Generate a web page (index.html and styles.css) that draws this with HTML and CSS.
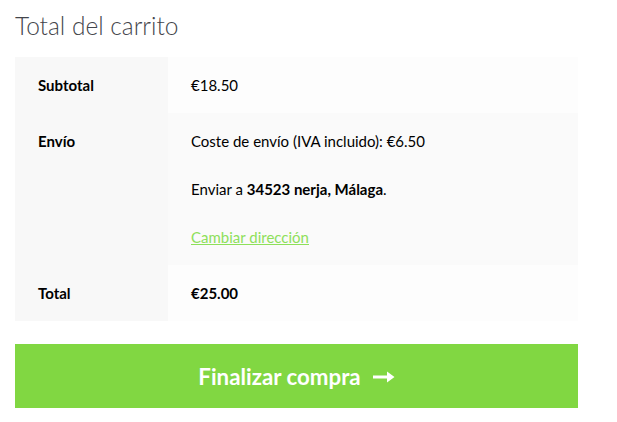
FILE: index.html
```
<!DOCTYPE html>
<html lang="es">
<head>
  <meta charset="UTF-8">
  <title>Total del carrito</title>
  <link rel="stylesheet" href="styles.css">
</head>
<body>
<div class="cart-totals">
  <h2>Total del carrito</h2>
  <table class="totals">
    <tr class="row-subtotal">
      <th>Subtotal</th>
      <td>€18.50</td>
    </tr>
    <tr class="row-shipping">
      <th>Envío</th>
      <td>
        <p>Coste de envío (IVA incluido): €6.50</p>
        <p>Enviar a <strong>34523 nerja, Málaga</strong>.</p>
        <a href="#" class="change-address">Cambiar dirección</a>
      </td>
    </tr>
    <tr class="row-total">
      <th>Total</th>
      <td><strong>€25.00</strong></td>
    </tr>
  </table>
  <a href="#" class="checkout-button">Finalizar compra
    <svg class="arrow" width="22" height="12" viewBox="0 0 22 12">
      <path d="M0 4.5h14V0.5l7.5 5.5-7.5 5.5V7.5H0z" fill="#fff"/>
    </svg>
  </a>
</div>
</body>
</html>
```

FILE: styles.css
```
html,
body {
  margin: 0;
  background: #fff;
  font-family: 'Lato', sans-serif;
  color: #000;
}
.cart-totals {
  width: 563px;
  padding: 10px 15px;
}
h2 {
  margin: 0 0 15px;
  font-size: 24.5px;
  font-weight: 300;
  color: #43454b;
  line-height: 32px;
}
.totals {
  width: 100%;
  border-collapse: collapse;
  font-size: 15px;
}
th, td {
  text-align: left;
  vertical-align: top;
  padding: 16px 23px 15px;
  line-height: 25px;
}
th {
  width: 107px;
  background: #f8f8f8;
  font-weight: 700;
}
td {
  background: #fdfdfd;
}
.row-shipping td {
  background: #fafafa;
}
td p {
  margin: 0 0 23px;
}
.change-address {
  color: #8ee05a;
  text-decoration: underline;
}
.checkout-button {
  display: flex;
  justify-content: center;
  align-items: center;
  gap: 12px;
  margin-top: 23px;
  height: 64px;
  background: #81d742;
  color: #fff;
  font-size: 22.3px;
  font-weight: 700;
  text-decoration: none;
}
.arrow {
  margin-top: 1px;
}
```
